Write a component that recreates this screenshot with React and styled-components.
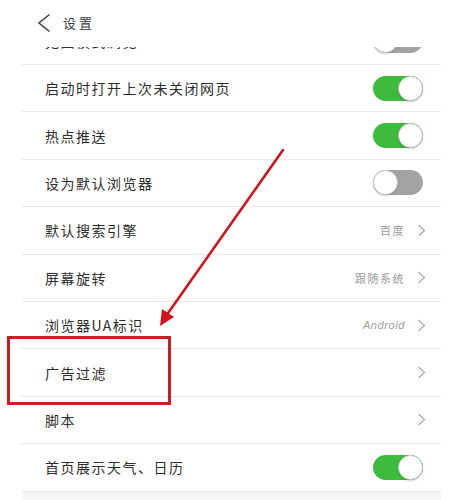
import React from 'react';
import styled, { createGlobalStyle } from 'styled-components';

const GlobalStyle = createGlobalStyle`
  html, body {
    margin: 0;
    padding: 0;
    background: #ffffff;
  }
  body {
    font-family: "Noto Sans CJK SC", "Noto Sans", sans-serif;
    color: #333333;
  }
`;

const Page = styled.div`
  position: relative;
  width: 457px;
  height: 500px;
  overflow: hidden;
  background: #ffffff;
`;

const Header = styled.div`
  display: flex;
  align-items: center;
  height: 47px;
  padding: 0 0 2px 37px;
  box-sizing: border-box;
  background: #ffffff;
`;

const HeaderTitle = styled.div`
  margin-left: 12px;
  font-size: 13px;
  letter-spacing: 3px;
  color: #3a3a3a;
  line-height: 1;
`;

const List = styled.div`
  margin: 0 16px 0 22px;
`;

const Clip = styled.div`
  height: 18px;
  overflow: hidden;
  display: flex;
  flex-direction: column;
  justify-content: flex-end;
`;

const Row = styled.div`
  display: flex;
  align-items: center;
  flex-shrink: 0;
  height: 47.4px;
  box-sizing: border-box;
  padding: 0 ${(p) => (p.$arrow ? '15px' : '18px')} 0 23px;
  border-bottom: 1px solid #e8e8e8;
`;

const Label = styled.div`
  flex: 1;
  font-size: 14px;
  letter-spacing: 1.5px;
  color: #2e2e2e;
  white-space: nowrap;
`;

const Value = styled.div`
  font-size: 11px;
  letter-spacing: ${(p) => (p.$latin ? '0.6px' : '1.5px')};
  color: #9b9b9b;
  margin-right: 12px;
  font-style: ${(p) => (p.$latin ? 'italic' : 'normal')};
  font-family: ${(p) =>
    p.$latin ? '"Liberation Sans", sans-serif' : '"Noto Sans CJK SC", sans-serif'};
`;

const Track = styled.div`
  position: relative;
  width: 50px;
  height: 25px;
  border-radius: 13px;
  background: ${(p) => (p.$on ? '#3cbb3c' : '#a3a3a3')};
  box-sizing: border-box;
`;

const Knob = styled.div`
  position: absolute;
  top: 0;
  ${(p) => (p.$on ? 'right: 0;' : 'left: 0;')}
  width: 25px;
  height: 25px;
  border-radius: 50%;
  background: #ffffff;
  box-sizing: border-box;
  border: 1px solid #c8c8c8;
  box-shadow: 0 1px 2px rgba(0, 0, 0, 0.2);
`;

const Footer = styled.div`
  height: 20px;
  background: #f6f6f6;
`;

const Highlight = styled.div`
  position: absolute;
  left: 7px;
  top: 336px;
  width: 164px;
  height: 69px;
  box-sizing: border-box;
  border: 3px solid #cc1d22;
  pointer-events: none;
`;

const Overlay = styled.svg`
  position: absolute;
  left: 0;
  top: 0;
  pointer-events: none;
`;

function BackIcon() {
  return (
    <svg width="14" height="20" viewBox="0 0 14 20">
      <polyline
        points="12.5,1.5 2,10 12.5,18.5"
        fill="none"
        stroke="#444"
        strokeWidth="1.6"
        strokeLinejoin="miter"
      />
    </svg>
  );
}

function Chevron() {
  return (
    <svg width="9" height="13" viewBox="0 0 9 13">
      <polyline
        points="1.5,1 7.5,6.5 1.5,12"
        fill="none"
        stroke="#a8a8a8"
        strokeWidth="1.2"
      />
    </svg>
  );
}

function Toggle({ on }) {
  return (
    <Track $on={on}>
      <Knob $on={on} />
    </Track>
  );
}

const rows = [
  { label: '启动时打开上次未关闭网页', toggle: true },
  { label: '热点推送', toggle: true },
  { label: '设为默认浏览器', toggle: false },
  { label: '默认搜索引擎', value: '百度' },
  { label: '屏幕旋转', value: '跟随系统' },
  { label: '浏览器UA标识', value: 'Android', latin: true },
  { label: '广告过滤', value: '' },
  { label: '脚本', value: '' },
  { label: '首页展示天气、日历', toggle: true },
];

export default function App() {
  return (
    <Page>
      <GlobalStyle />
      <Header>
        <BackIcon />
        <HeaderTitle>设置</HeaderTitle>
      </Header>

      <List>
        {/* row scrolled mostly under the header */}
        <Clip>
          <Row>
            <Label>无图模式浏览</Label>
            <Toggle on={false} />
          </Row>
        </Clip>

        {rows.map((r) => (
          <Row key={r.label} $arrow={r.value !== undefined}>
            <Label>{r.label}</Label>
            {r.value !== undefined ? (
              <>
                {r.value && <Value $latin={r.latin}>{r.value}</Value>}
                <Chevron />
              </>
            ) : (
              <Toggle on={r.toggle} />
            )}
          </Row>
        ))}
        <Footer />
      </List>

      <Highlight />
      <Overlay width="457" height="500" viewBox="0 0 457 500">
        <line
          x1="283"
          y1="150"
          x2="166"
          y2="316"
          stroke="#d0161c"
          strokeWidth="2.6"
          strokeLinecap="round"
        />
        <polygon points="160,326 162,309 174,317" fill="#d0161c" />
      </Overlay>
    </Page>
  );
}
